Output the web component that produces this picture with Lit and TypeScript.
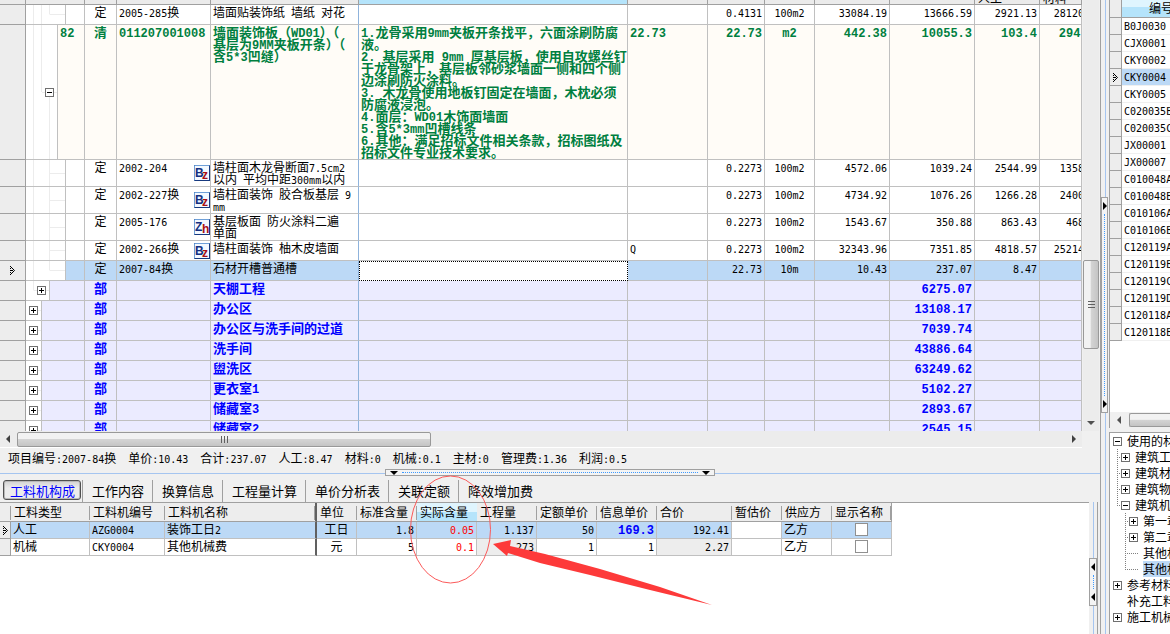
import { LitElement, html, css, svg, nothing, TemplateResult } from "lit";
import { customElement, property } from "lit/decorators.js";
import { classMap } from "lit/directives/class-map.js";

/** Wraps runs of Latin text, with the blanks beside them, so that they are set half as wide as the Chinese. */
function mixed(text: string): TemplateResult[] {
  return (text.match(/[\x20-\x7e]+|[^\x20-\x7e]+/g) ?? []).map((run) =>
    /^[\x20-\x7e]/.test(run) ? html`<span class="latin">${run}</span>` : html`${run}`
  );
}

const base = css`
  * { box-sizing: border-box; }
  table { border-collapse: separate; border-spacing: 0; table-layout: fixed; }
  td, th { padding: 0; text-align: left; vertical-align: top; overflow: hidden; }
  th { font-weight: 400; }
  button { font: inherit; color: inherit; border: 0; background: none; padding: 0; margin: 0; }
  .latin { font-family: "DejaVu Sans Mono", monospace; font-size: 10px; line-height: 0; }
  .box {
    flex: none; width: 9px; height: 9px; border: 1px solid #707070; display: block;
    background:
      linear-gradient(#000, #000) center / 5px 1px no-repeat,
      #fff;
  }
  .box.plus {
    background:
      linear-gradient(#000, #000) center / 5px 1px no-repeat,
      linear-gradient(#000, #000) center / 1px 5px no-repeat,
      #fff;
  }
  .grip { display: flex; align-items: center; justify-content: space-between; background: #f4f4f4; border: 1px solid #a0a0a0; }
  .grip.tall { flex-direction: column; }
  svg { display: block; flex: none; }
`;

const currentMark = html`<svg width="6" height="9" viewBox="0 0 6 9">
  <path d="M.5 .5L4.500 4.500L.5 8.500" fill="none" stroke="#000" />
  <path d="M.5 0v9" stroke="#000" stroke-dasharray="1 1" />
  <path d="M1 4h2v1H1z" fill="#000" /></svg>`;

type Kind = "norm" | "list" | "part";
interface Item {
  kind: Kind;
  indent: number;
  no?: string;
  type: string;
  code?: string;
  badge?: string;
  name: string;
  detail?: string;
  formula?: string;
  values: string[];
  open?: boolean;
  current?: boolean;
  guides: string;
}

const ITEMS: Item[] = [
  { kind: "norm", indent: 39, type: "定", code: "2005-285换", name: "墙面贴装饰纸 墙纸 对花", values: ["0.4131", "100m2", "33084.19", "13666.59", "2921.13", "28120.50"], guides: "last deep" },
  { kind: "list", indent: 31, no: "82", type: "清", code: "011207001008", name: "墙面装饰板（WD01）（\n基层为9MM夹板开条）（\n含5*3凹缝）", detail: "1.龙骨采用9mm夹板开条找平，六面涂刷防腐\n液。\n2. 基层采用 9mm 厚基层板，使用自攻螺丝钉\n于龙骨架上，基层板邻砂浆墙面一侧和四个侧\n边涂刷防火涂料。\n3. 木龙骨使用地板钉固定在墙面，木枕必须\n防腐液浸泡。\n4.面层：WD01木饰面墙面\n5.含5*3mm凹槽线条\n6.其他：满足招标文件相关条款，招标图纸及\n招标文件专业技术要求。", formula: "22.73", values: ["22.73", "m2", "442.38", "10055.3", "103.4", "294.55"], open: true, guides: "branch" },
  { kind: "norm", indent: 39, type: "定", code: "2002-204", badge: "Bz", name: "墙柱面木龙骨断面7.5cm2\n以内 平均中距300mm以内", values: ["0.2273", "100m2", "4572.06", "1039.24", "2544.99", "1358.20"], guides: "mid" },
  { kind: "norm", indent: 39, type: "定", code: "2002-227换", badge: "Bz", name: "墙柱面装饰 胶合板基层 9\nmm", values: ["0.2273", "100m2", "4734.92", "1076.26", "1266.28", "2400.10"], guides: "mid" },
  { kind: "norm", indent: 39, type: "定", code: "2005-176", badge: "Zh", name: "基层板面 防火涂料二遍\n单面", values: ["0.2273", "100m2", "1543.67", "350.88", "863.43", "468.30"], guides: "mid" },
  { kind: "norm", indent: 39, type: "定", code: "2002-266换", badge: "Bz", name: "墙柱面装饰 柚木皮墙面", formula: "Q", values: ["0.2273", "100m2", "32343.96", "7351.85", "4818.57", "25214.70"], guides: "mid" },
  { kind: "norm", indent: 39, type: "定", code: "2007-84换", name: "石材开槽普通槽", values: ["22.73", "10m", "10.43", "237.07", "8.47", ""], current: true, guides: "last" },
  { kind: "part", indent: 23, type: "部", name: "天棚工程", values: ["", "", "", "6275.07", "", ""], guides: "end" },
  ...([
    ["办公区", "13108.17"],
    ["办公区与洗手间的过道", "7039.74"],
    ["洗手间", "43886.64"],
    ["盥洗区", "63249.62"],
    ["更衣室1", "5102.27"],
    ["储藏室3", "2893.67"],
    ["储藏室2", "2545.15"],
  ].map(([name, sum]) => ({ kind: "part", indent: 15, type: "部", name, values: ["", "", "", sum, "", ""], guides: "none" })) as Item[]),
];

@customElement("bill-grid")
class BillGrid extends LitElement {
  static styles = [
    base,
    css`
      :host { display: block; overflow: hidden; background: #fff; }
      table { width: 100%; }
      th { height: 5px; background: #ebebeb; border-right: 1px solid #a0a0a0; border-bottom: 1px solid #a0a0a0; }
      th.active { background: #b5e4fb; }
      .cut { height: 4px; display: flex; align-items: flex-end; overflow: hidden; padding-left: 3px; line-height: 13px; white-space: nowrap; }
      td { height: 20px; padding: 1px 2px; line-height: 12px; white-space: pre; border-right: 1px solid #c0c0c0; border-bottom: 1px solid #c0c0c0; }
      tr.list { background: #fffcf7; color: #007f3f; font-weight: 700; font-size: 13px; }
      tr.part { background: #ebebff; color: #0000ff; font-weight: 700; font-size: 13px; }
      .list .latin, .part .latin { font-family: "Liberation Mono", monospace; font-size: 12px; }
      tr.current { background: #bcd9f6; }
      td.lead, td.fill { padding: 0; height: 1px; }
      td.lead { background: #ededed; border-color: #a0a0a0; }
      .lead div, .fill div { height: 100%; display: flex; align-items: center; }
      .lead div { padding-left: 10px; }
      .type { text-align: center; }
      td.name { border-right-color: #8fb3dc; }
      .num { text-align: right; }
      .unit { text-align: center; }
      .code { flex: 1; align-self: flex-start; padding: 1px 0 0 2px; }
      .current .detail { background: #fff; border: 1px dotted #000; }
      .rail { border-right: 1px solid #c0c0c0; background-color: #fff; background-repeat: no-repeat; justify-content: flex-end; padding-right: 3px; }
      .fill .rail { flex: none; height: 100%; }
      .no { flex: 1; align-self: flex-start; padding: 1px 0 0 2px; }
      .overrun { width: 60px; text-align: right; }
      .mid { background-image: linear-gradient(#ececec, #ececec), linear-gradient(#ececec, #ececec), linear-gradient(#ececec, #ececec); background-position: 7px 0, 23px 0, 24px 50%; background-size: 1px 100%, 1px 100%, 15px 1px; }
      .last { background-image: linear-gradient(#ececec, #ececec), linear-gradient(#ececec, #ececec), linear-gradient(#ececec, #ececec); background-position: 7px 0, 23px 0, 24px 50%; background-size: 1px 100%, 1px 50%, 15px 1px; }
      .deep { background-image: linear-gradient(#ececec, #ececec), linear-gradient(#ececec, #ececec), linear-gradient(#ececec, #ececec), linear-gradient(#ececec, #ececec); background-position: 7px 0, 23px 0, 24px 50%, 15px 0; background-size: 1px 100%, 1px 50%, 15px 1px, 1px 100%; }
      .branch { background-image: linear-gradient(#ececec, #ececec), linear-gradient(#ececec, #ececec), linear-gradient(#ececec, #ececec), linear-gradient(#ececec, #ececec); background-position: 7px 0, 15px 0, 16px 50%, 23px 100%; background-size: 1px 100%, 1px 50%, 15px 1px, 1px 50%; }
      .end { background-image: linear-gradient(#ececec, #ececec), linear-gradient(#ececec, #ececec); background-position: 7px 0, 8px 50%; background-size: 1px 50%, 15px 1px; }
      .none { background-image: linear-gradient(#ececec, #ececec); background-position: 8px 50%; background-size: 7px 1px; }
      .w26 { width: 26px; } .w59 { width: 59px; } .w32 { width: 32px; } .w94 { width: 94px; }
      .w148 { width: 148px; } .w269 { width: 269px; } .w80 { width: 80px; } .w57 { width: 57px; }
      .w50 { width: 50px; } .w75 { width: 75px; } .w85 { width: 85px; } .w65 { width: 65px; }
    `,
  ];

  private badge(text: string) {
    return html`<svg width="16" height="16" viewBox="0 0 16 16">
      <rect x=".5" y=".5" width="15" height="15" fill="#f4f9ff" stroke="#17397e" />
      <path d="M.5 15.500V.5h15" fill="none" stroke="#6fa0d8" />
      <text x="1" y="12" font-family="Liberation Sans, Arial, sans-serif" font-weight="700" font-size="12" fill="#132f80">${text[0]}</text>
      <text x="8" y="14" font-family="Liberation Sans, Arial, sans-serif" font-weight="700" font-size="12" fill="#a80f14">${text[1]}</text>
    </svg>`;
  }

  private row(item: Item) {
    const [qty, unit, price, sum, labour, material] = item.values;
    return html`<tr class=${classMap({ [item.kind]: true, current: !!item.current })}>
      <td class="lead"><div>${item.current ? currentMark : nothing}</div></td>
      <td class="fill"><div>
        <div class="rail ${item.guides}" style="width:${item.indent + 1}px">${item.kind === "norm"
          ? nothing
          : html`<button class=${classMap({ box: true, plus: !item.open })} aria-label=${item.open ? "收起" : "展开"}></button>`}</div>
        <span class="no">${mixed(item.no ?? "")}</span>
      </div></td>
      <td class="type">${item.type}</td>
      <td class="fill"><div><span class="code">${mixed(item.code ?? "")}</span>${item.badge ? this.badge(item.badge) : nothing}</div></td>
      <td class="name">${mixed(item.name)}</td>
      <td class="detail">${mixed(item.detail ?? "")}</td>
      <td>${mixed(item.formula ?? "")}</td>
      <td class="num">${mixed(qty)}</td>
      <td class="unit">${mixed(unit)}</td>
      <td class="num">${mixed(price)}</td>
      <td class="num">${mixed(sum)}</td>
      <td class="num">${mixed(labour)}</td>
      <td><div class="overrun">${mixed(material)}</div></td>
    </tr>`;
  }

  render() {
    const widths = [26, 59, 32, 94, 148, 269, 80, 57, 50, 75, 85, 65];
    return html`<table>
        <thead><tr>
          ${widths.map((w, i) => html`<th class=${classMap({ ["w" + w]: true, active: i === 5 })}>${i === 11 ? html`<div class="cut">人工</div>` : nothing}</th>`)}
          <th><div class="cut">材料</div></th>
        </tr></thead>
        <tbody>${ITEMS.map((i) => this.row(i))}</tbody>
      </table>`;
  }
}

interface Resource {
  cells: string[];
  current?: boolean;
  info?: boolean;
}

const RESOURCES: Resource[] = [
  { cells: ["人工", "AZG0004", "装饰工日2", "工日", "1.8", "0.05", "1.137", "50", "169.3", "192.41", "", "乙方"], current: true, info: true },
  { cells: ["机械", "CKY0004", "其他机械费", "元", "5", "0.1", "2.273", "1", "1", "2.27", "", "乙方"] },
];

@customElement("resource-grid")
class ResourceGrid extends LitElement {
  static styles = [
    base,
    css`
      :host { display: block; overflow: hidden; background: #fff; }
      table { width: 892px; }
      th { height: 19px; line-height: 18px; padding-left: 3px; white-space: nowrap; background: linear-gradient(#a0a0a0, #a0a0a0) right 3px / 1px 14px no-repeat, #ededed; border-bottom: 1px solid #a0a0a0; }
      th:last-child { border-right: 1px solid #a0a0a0; }
      th.active { background: linear-gradient(#e0f5fe 50%, #b5e4fb 50%); }
      td { height: 17px; line-height: 14px; padding: 0 2px; white-space: nowrap; border-right: 1px solid #c0c0c0; border-bottom: 1px solid #c0c0c0; }
      td.lead { padding: 4px 0 0 3px; background: #ededed; border-color: #a0a0a0; }
      .current td.lead { background: #ededed; }
      .num { text-align: right; }
      .c2 { border-right: 2px solid #606060; }
      .c3, .c12 { text-align: center; }
      th.c3, th.c12 { text-align: left; }
      td.c5 { color: #ff0000; }
      td.c6, td.c9 { background: #ededed; }
      .current td:not(.lead) { background: #bcd9f6; }
      .current td.c10:not(.lead) { background: #fff; }
      .strong { color: #0000ff; font-weight: 700; }
      .strong .latin { font-family: "Liberation Mono", monospace; font-size: 12px; }
      input { appearance: none; display: block; width: 13px; height: 13px; margin: 1px auto 0; background: #fff; border: 1px solid #909090; }
      .w11 { width: 11px; } .w79 { width: 79px; } .w75 { width: 75px; } .w152 { width: 152px; }
      .w40 { width: 40px; } .w60 { width: 60px; } .w50 { width: 50px; }
    `,
  ];

  render() {
    const heads: [string, number][] = [["工料类型", 79], ["工料机编号", 75], ["工料机名称", 152], ["单位", 40], ["标准含量", 60], ["实际含量", 60], ["工程量", 60], ["定额单价", 60], ["信息单价", 60], ["合价", 75], ["暂估价", 50], ["供应方", 50], ["显示名称", 60]];
    return html`<table>
      <thead><tr>
        <th class="w11"></th>
        ${heads.map(([h, w], i) => html`<th class=${classMap({ ["w" + w]: true, ["c" + i]: true, active: i === 5 })}>${h}</th>`)}
      </tr></thead>
      <tbody>
        ${RESOURCES.map((r) => html`<tr class=${classMap({ current: !!r.current })}>
          <td class="lead">${r.current ? currentMark : nothing}</td>
          ${r.cells.map((c, i) => html`<td class=${classMap({ ["c" + i]: true, num: i > 3 && i < 10, strong: i === 8 && !!r.info })}>${mixed(c)}</td>`)}
          <td class="c12"><input type="checkbox" aria-label="显示名称 ${r.cells[2]}" /></td>
        </tr>`)}
      </tbody>
    </table>`;
  }
}

@customElement("split-grip")
class SplitGrip extends LitElement {
  @property() direction: "left" | "right" | "down" = "right";
  static styles = [
    base,
    css`
      :host { display: block; }
      .grip { width: 100%; height: 100%; }
      .dots { flex: 1; border: 0 dotted #3f9bff; }
      .tall .dots { border-left-width: 1px; margin: 4px 0; }
      .wide .dots { border-top-width: 1px; margin: 0 4px; }
      .tall { padding: 4px 0; }
      .wide { padding: 0 4px; }
    `,
  ];
  render() {
    const shape = { right: "0,0 4,4 0,8", left: "4,0 0,4 4,8", down: "0,0 8,0 4,4" }[this.direction];
    const wide = this.direction === "down";
    const arrow = () => html`<svg width=${wide ? 8 : 4} height=${wide ? 4 : 8}>${svg`<polygon points=${shape} fill="#000" />`}</svg>`;
    return html`<div class="grip ${wide ? "wide" : "tall"}">${arrow()}<span class="dots"></span>${arrow()}</div>`;
  }
}

interface Node {
  label: string;
  level: number;
  mark?: "+" | "-";
  lines: string;
  current?: boolean;
}

const NODES: Node[] = [
  { label: "使用的材料", level: 0, mark: "-", lines: "" },
  { label: "建筑工程", level: 1, mark: "+", lines: "through" },
  { label: "建筑材料", level: 1, mark: "+", lines: "through" },
  { label: "建筑物", level: 1, mark: "+", lines: "through" },
  { label: "建筑机械", level: 1, mark: "-", lines: "stop" },
  { label: "第一章", level: 2, mark: "+", lines: "through" },
  { label: "第二章", level: 2, mark: "+", lines: "through" },
  { label: "其他机械", level: 2, lines: "through" },
  { label: "其他机械", level: 2, lines: "stop", current: true },
  { label: "参考材料", level: 0, mark: "+", lines: "" },
  { label: "补充工料", level: 0, lines: "" },
  { label: "施工机械", level: 0, mark: "+", lines: "" },
];

const CODES = ["B0J0030", "CJX0001", "CKY0002", "CKY0004", "CKY0005", "C020035B", "C020035C", "JX00001", "JX00007", "C010048A", "C010048B", "C010106A", "C010106B", "C120119A", "C120119B", "C120119C", "C120119D", "C120118A", "C120118B"];

@customElement("side-pane")
class SidePane extends LitElement {
  static styles = [
    base,
    css`
      :host { display: flex; flex-direction: column; overflow: hidden; background: #f0f0f0; }
      .codes { flex: 1; overflow: hidden; background: #fff; border-left: 1px solid #a0a0a0; }
      table { width: 100%; min-width: 90px; }
      th { height: 18px; line-height: 16px; text-align: center; border-bottom: 1px solid #a0a0a0; background: linear-gradient(#dff5fe 40%, #b5e4fb 40%); }
      td { height: 17px; line-height: 14px; padding-left: 2px; white-space: nowrap; border-bottom: 1px solid #f0f0f0; }
      .lead { width: 12px; padding: 0; background: #ededed; border-right: 1px solid #a0a0a0; border-bottom: 1px solid #a0a0a0; }
      td.lead { padding: 4px 0 0 3px; }
      .current { background: #bcd9f6; }
      .scroll { flex: none; height: 16px; margin-bottom: 4px; display: flex; align-items: center; padding-left: 7px; border-left: 1px solid #a0a0a0; }
      .thumb { flex: 1; height: 14px; margin-left: 8px; border: 1px solid #999; border-right: 0; border-radius: 2px 0 0 2px; background: linear-gradient(#f2f2f2 45%, #d4d4d4 50%, #c4c4c4); }
      .tree { flex: none; height: 202px; margin: 0; padding: 0; list-style: none; background: #fff; border-left: 1px solid #a0a0a0; border-top: 1px solid #a0a0a0; overflow: hidden; }
      .node { display: flex; align-items: center; height: 16px; padding-left: 3px; white-space: nowrap; }
      .step { flex: none; width: 8px; height: 16px; }
      .step.through, .step.stop { background: repeating-linear-gradient(#808080 0 1px, #fff 1px 2px) 4px 0 / 1px 100% no-repeat, repeating-linear-gradient(90deg, #808080 0 1px, #fff 1px 2px) 4px 8px / 4px 1px no-repeat; }
      .step.stop { background-size: 1px 50%, 4px 1px; }
      .leaf { flex: none; width: 9px; height: 1px; }
      .leaf.dotted { background: repeating-linear-gradient(90deg, #808080 0 1px, #fff 1px 2px); }
      .label { margin-left: 5px; line-height: 16px; flex: 1; }
    `,
  ];
  render() {
    return html`
      <div class="codes"><table>
        <thead><tr><th class="lead"></th><th>编号</th></tr></thead>
        <tbody>${CODES.map((c) => html`<tr class=${classMap({ current: c === "CKY0004" })}><td class="lead">${c === "CKY0004" ? currentMark : nothing}</td><td>${mixed(c)}</td></tr>`)}</tbody>
      </table></div>
      <div class="scroll"><svg width="4" height="8"><polygon points="4,0 0,4 4,8" fill="#505050" /></svg><span class="thumb"></span></div>
      <ul class="tree">${NODES.map((n) => html`<li class="node">
        ${n.level === 2 ? html`<span class="step"></span>` : nothing}
        ${n.level ? html`<span class="step ${n.lines}"></span>` : nothing}
        ${n.mark ? html`<button class=${classMap({ box: true, plus: n.mark === "+" })} aria-label=${n.label}></button>` : html`<span class=${classMap({ leaf: true, dotted: n.level > 0 })}></span>`}
        <span class=${classMap({ label: true, current: !!n.current })}>${n.label}</span>
      </li>`)}</ul>`;
  }
}

@customElement("app-root")
class AppRoot extends LitElement {
  static styles = [
    base,
    css`
      :host { display: flex; position: relative; height: 100vh; min-height: 400px; overflow: hidden; background: #f0f0f0; color: #000; font: 12px "Noto Sans CJK SC", sans-serif; }
      .main { flex: 1; min-width: 0; display: flex; flex-direction: column; border-right: 1px solid #a0a0a0; }
      .upper { flex: 1; min-height: 0; display: flex; }
      bill-grid { flex: 1; min-width: 0; }
      .vscroll { flex: none; width: 16px; margin: 0 1px; display: flex; flex-direction: column; align-items: center; background: #ececec; }
      .vthumb { flex: 88; align-self: stretch; display: flex; flex-direction: column; align-items: center; justify-content: center; gap: 2px; border: 1px solid #999; border-radius: 2px; background: linear-gradient(90deg, #f2f2f2 45%, #d4d4d4 50%, #c4c4c4); }
      .vthumb i { width: 7px; height: 1px; background: #606060; }
      .above { flex: 261; }
      .below { flex: 72; }
      .hscroll { flex: none; height: 17px; margin-right: 18px; padding: 1px 6px; display: flex; align-items: center; background: #ececec; border-bottom: 1px solid #fff; }
      .hthumb { flex: 413; height: 15px; margin-left: 7px; display: flex; align-items: center; justify-content: center; gap: 2px; border: 1px solid #999; border-radius: 2px; background: linear-gradient(#f2f2f2 45%, #d4d4d4 50%, #c4c4c4); }
      .hthumb i { width: 1px; height: 7px; background: #606060; }
      .rest { flex: 642; }
      .arrow-gap { margin-bottom: 6px; }
      .status { flex: none; height: 21px; padding-left: 8px; display: flex; gap: 12px; line-height: 20px; white-space: nowrap; }
      .divider { flex: none; height: 8px; display: flex; justify-content: center; background: linear-gradient(#a5c5f0, #a5c5f0) 0 4px / 100% 1px no-repeat; }
      .divider split-grip { width: 330px; height: 7px; }
      .tabs { flex: none; height: 25px; padding: 3px 0 0 3px; display: flex; font-size: 13px; }
      .tab { height: 22px; padding: 0 8px 2px 9px; border-left: 1px solid #a0a0a0; white-space: nowrap; }
      .tab.on { height: 20px; padding: 0 5px 0 6px; margin-right: 1px; line-height: 17px; border: 1px solid #505050; border-radius: 3px; background: linear-gradient(#d2d2d2, #ececec 40%); box-shadow: inset 0 0 0 1px #b8b8b8; color: #0000ff; }
      .lower { flex: none; height: 132px; display: flex; }
      resource-grid { flex: 1; min-width: 0; border-top: 1px solid #a0a0a0; }
      .vsplit { flex: none; width: 8px; display: flex; flex-direction: column; background: linear-gradient(#a5c5f0, #a5c5f0) 4px 0 / 1px 100% no-repeat; }
      .inner { margin-right: 2px; border-right: 1px solid #a0a0a0; width: 9px; }
      .inner split-grip { height: 48px; margin-top: 56px; }
      .outer split-grip { flex: 216; width: 7px; }
      .before { flex: 197; }
      .after { flex: 221; }
      side-pane { flex: none; width: 61px; }
      .note { position: absolute; left: 400px; top: 470px; pointer-events: none; }
    `,
  ];

  render() {
    const status = ["项目编号:2007-84换", "单价:10.43", "合计:237.07", "人工:8.47", "材料:0", "机械:0.1", "主材:0", "管理费:1.36", "利润:0.5"];
    const tabs = ["工料机构成", "工作内容", "换算信息", "工程量计算", "单价分析表", "关联定额", "降效增加费"];
    return html`
      <main class="main">
        <div class="upper">
          <bill-grid></bill-grid>
          <div class="vscroll">
            <span class="above"></span>
            <span class="vthumb"><i></i><i></i><i></i></span>
            <span class="below"></span>
            <svg class="arrow-gap" width="8" height="4"><polygon points="0,0 8,0 4,4" fill="#505050" /></svg>
          </div>
        </div>
        <div class="hscroll">
          <svg width="4" height="8"><polygon points="4,0 0,4 4,8" fill="#404040" /></svg>
          <span class="hthumb"><i></i><i></i><i></i></span>
          <span class="rest"></span>
          <svg width="4" height="8"><polygon points="0,0 4,4 0,8" fill="#404040" /></svg>
        </div>
        <div class="status">${status.map((s) => html`<span>${mixed(s)}</span>`)}</div>
        <div class="divider"><split-grip direction="down"></split-grip></div>
        <nav class="tabs">${tabs.map((t, i) => html`<button class=${classMap({ tab: true, on: i === 0 })}>${t}</button>`)}</nav>
        <div class="lower">
          <resource-grid></resource-grid>
          <div class="vsplit inner"><split-grip direction="left"></split-grip></div>
        </div>
      </main>
      <div class="vsplit outer"><span class="before"></span><split-grip direction="right"></split-grip><span class="after"></span></div>
      <side-pane></side-pane>
      <svg class="note" width="320" height="140" viewBox="0 0 320 140">
        <ellipse cx="50.500" cy="59.500" rx="40" ry="53.500" fill="none" stroke="#fb5a5a" />
        <polygon points="93,74 111,70 110,76 145,84 200,99 260,117 312,135 250,120 190,105 140,93 108,83 107,86" fill="#fd3a3a" />
      </svg>`;
  }
}
